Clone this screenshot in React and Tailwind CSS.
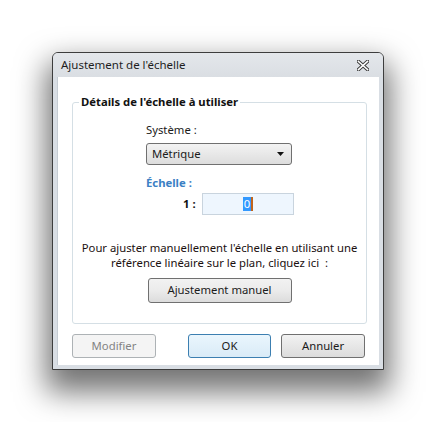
import React from "react";

function CloseIcon() {
  return (
    <svg width="12" height="11" viewBox="0 0 12 11">
      <path d="M1.5 1.5 L10.5 9.5 M10.5 1.5 L1.5 9.5" stroke="#3a3a3a" strokeWidth="3.6" strokeLinecap="square" fill="none" />
      <path d="M1.5 1.5 L10.5 9.5 M10.5 1.5 L1.5 9.5" stroke="#ffffff" strokeWidth="1.6" strokeLinecap="square" fill="none" />
    </svg>
  );
}

const btn =
  "flex items-center justify-center rounded-[3px] border text-[11.3px] text-[#1b1b1b]";

export default function App() {
  return (
    <div
      className="w-[437px] h-[422px] bg-white pl-[52px] pt-[52px]"
      style={{ fontFamily: '"Noto Sans", "Open Sans", sans-serif' }}
    >
      <div className="w-[332px] h-[318px] flex flex-col border border-[#3d3d3d] rounded-t-[6px] bg-[#d9dee4] shadow-[0_16px_30px_6px_rgba(0,0,0,0.55)]">
        {/* Title bar */}
        <div className="h-[24px] flex items-center justify-between pl-[8px] pr-[14px] rounded-t-[5px] bg-gradient-to-b from-[#e4e7eb] to-[#dadee3]">
          <span className="text-[11.5px] text-[#1e1e1e]">Ajustement de l'échelle</span>
          <CloseIcon />
        </div>
        {/* Client */}
        <div className="flex-1 mx-[4px] mb-[4px] bg-white border-l border-[#c5ccd3] flex flex-col px-[14px] pt-[25px]">
          <div className="relative h-[222px] w-[295px] border border-[#d5dfe5] rounded-[3px]">
            <span className="absolute left-[6px] top-[-9px] px-[2px] bg-white text-[11.3px] font-bold text-[#111] leading-[16px]">
              Détails de l'échelle à utiliser
            </span>
            <div className="flex flex-col">
              <div className="ml-[73px] mt-[19px] text-[11.3px] leading-[16px] text-[#1b1b1b]">Système :</div>
              <div className="ml-[73px] mt-[5px] w-[146px] h-[22px] rounded-[3px] border border-[#707070] bg-gradient-to-b from-[#f3f3f3] to-[#dddddd] flex items-center justify-between pl-[5px] pr-[7px]">
                <span className="text-[11.3px] text-[#1b1b1b]">Métrique</span>
                <svg width="7" height="4" viewBox="0 0 7 4">
                  <path d="M0 0 H7 L3.5 4 Z" fill="#111" />
                </svg>
              </div>
              <div className="ml-[73px] mt-[10px] text-[11.3px] leading-[16px] font-bold text-[#3b80c4]">Échelle :</div>
              <div className="flex items-center mt-[2px]">
                <span className="ml-[110px] w-[16px] text-[11.3px] font-bold text-[#111]">1 :</span>
                <div className="ml-[3px] w-[92px] h-[22px] border border-[#c9d4de] bg-[#eef6fe] flex items-center justify-center">
                  <span className="text-[11.3px] leading-[14px] bg-[#3399ff] text-white px-[1px]">0</span>
                  <span className="w-[2px] h-[14px] bg-[#c0651d]"></span>
                </div>
              </div>
              <div className="mt-[25px] text-center text-[11.3px] leading-[15px] text-[#1b1010]">
                Pour ajuster manuellement l'échelle en utilisant une
                <br />
                référence linéaire sur le plan, cliquez ici&nbsp; :
              </div>
              <div className={`${btn} self-center mt-[8px] w-[144px] h-[25px] border-[#707070] bg-gradient-to-b from-[#f2f2f2] via-[#ebebeb] to-[#dcdcdc]`}>
                Ajustement manuel
              </div>
            </div>
          </div>
          <div className="flex mt-[10px] h-[24px]">
            <div className={`${btn} w-[85px] border-[#adb2b5] bg-[#f4f4f4] text-[#838383]`}>Modifier</div>
            <div className={`${btn} ml-[32px] w-[84px] border-[#3c7fb1] bg-gradient-to-b from-[#eaf6fd] to-[#d9ebf7]`}>OK</div>
            <div className={`${btn} ml-[10px] w-[85px] border-[#707070] bg-gradient-to-b from-[#f2f2f2] to-[#dcdcdc]`}>Annuler</div>
          </div>
        </div>
      </div>
    </div>
  );
}
